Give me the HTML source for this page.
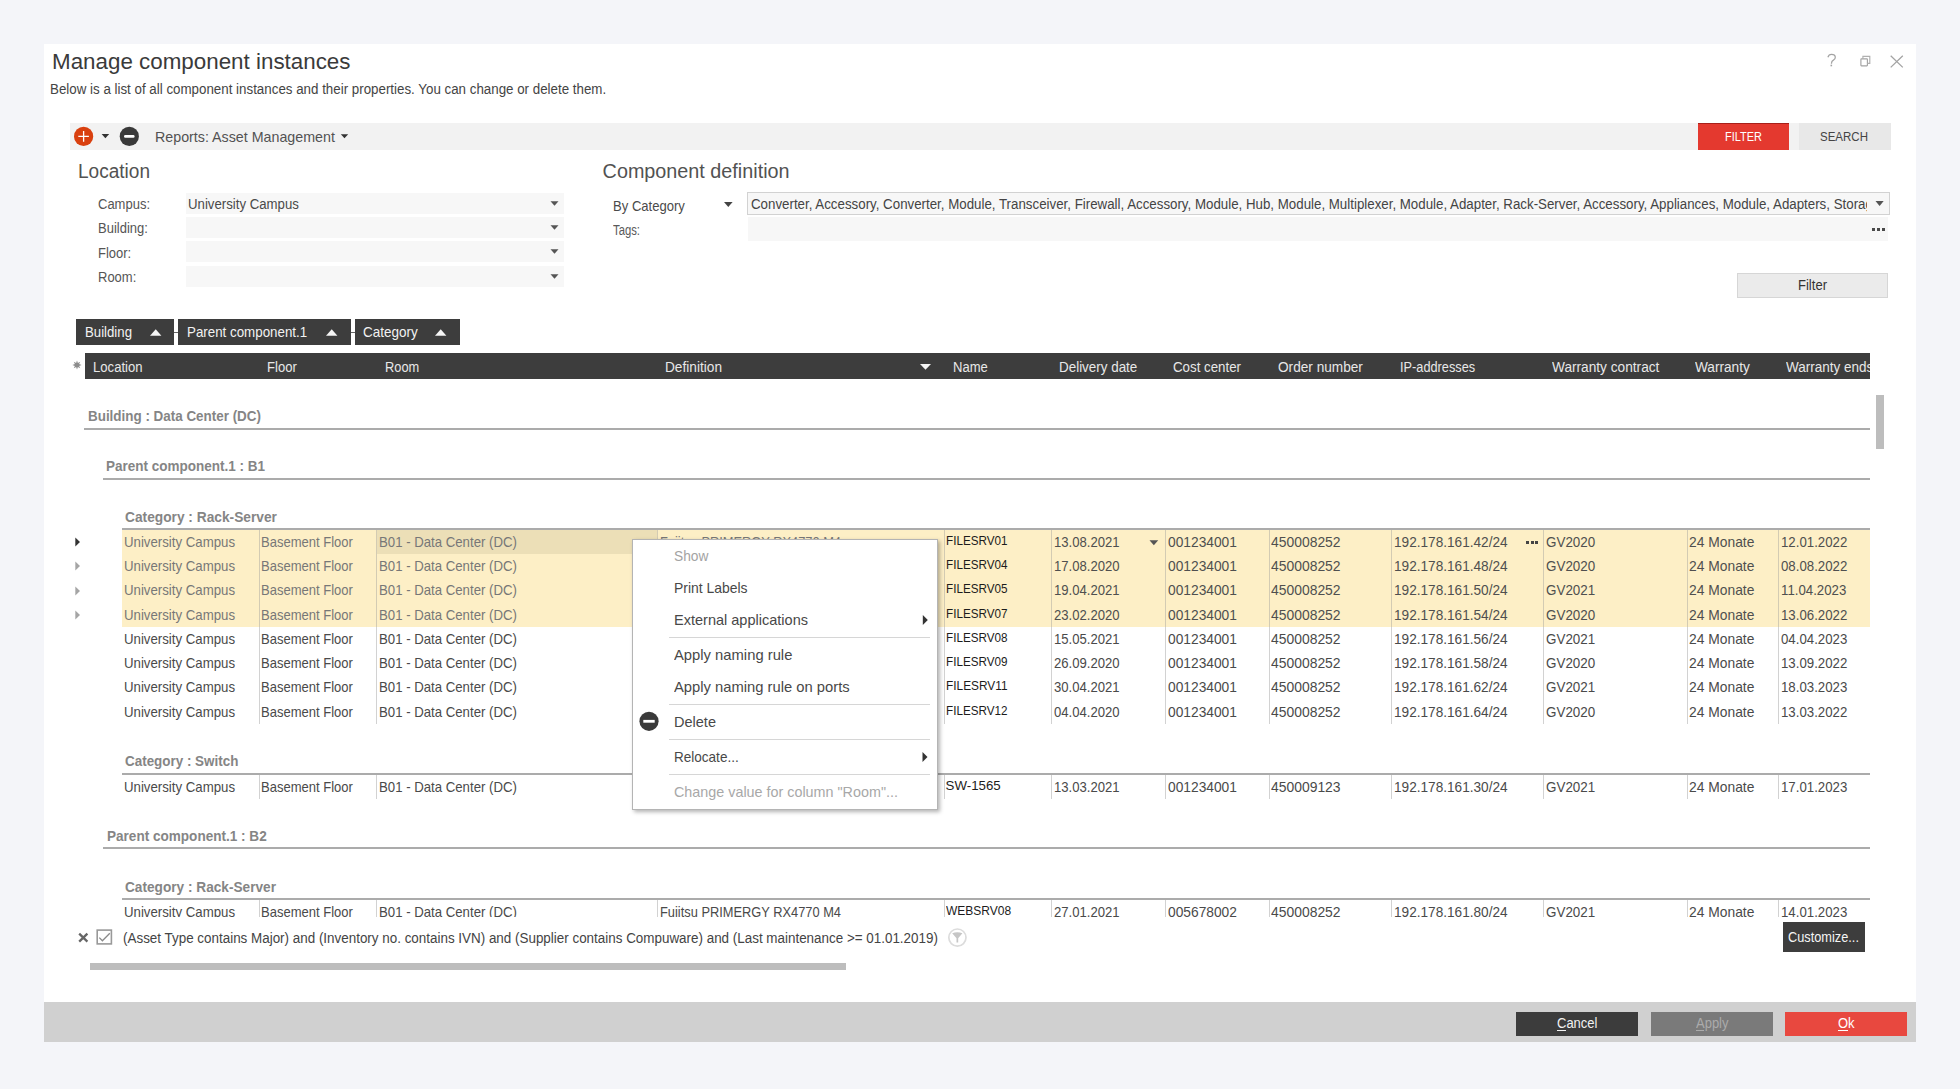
<!DOCTYPE html>
<html><head><meta charset="utf-8"><title>Manage component instances</title>
<style>
html,body{margin:0;padding:0;}
body{width:1960px;height:1089px;overflow:hidden;background:#f4f5f9;position:relative;font-family:"Liberation Sans",sans-serif;}
body div,body span,body svg{position:absolute;}
.t{white-space:nowrap;line-height:1;transform-origin:0 0;}
</style></head><body>
<div style="left:44px;top:44px;width:1872px;height:997.5px;background:#fff;"></div>
<span class="t" style="left:52.3px;top:50.92px;font-size:22.3px;color:#3a3a3a;transform:scaleX(1.0034);">Manage component instances</span>
<span class="t" style="left:49.6px;top:81.78px;font-size:14.429px;color:#444;transform:scaleX(0.9260);">Below is a list of all component instances and their properties. You can change or delete them.</span>
<svg style="left:1820px;top:50px" width="90" height="22" viewBox="1820 50 90 22"><path d="M1827.9 57.3 q0.9-2.9 3.6-2.9 q3.5 0 3.8 2.7 q0.2 1.8-1.9 3 q-1.9 1-1.9 3.2 v0.4" fill="none" stroke="#a3a3a3" stroke-width="1.25"/><rect x="1830.5" y="64.7" width="1.6" height="1.6" fill="#a3a3a3"/><rect x="1860.9" y="58.9" width="6.5" height="6.9" fill="none" stroke="#a3a3a3" stroke-width="1.15" rx="0.5"/><path d="M1862.9 58.9 v-2.5 h6.9 v7 h-2.4" fill="none" stroke="#b0b0b0" stroke-width="1.15"/><path d="M1890.7 55.8 L1902.8 67.4 M1902.8 55.8 L1890.7 67.4" stroke="#a3a3a3" stroke-width="1.3"/></svg>
<div style="left:70px;top:123px;width:1821px;height:27px;background:#f2f2f2;"></div>
<svg style="left:70px;top:123px" width="290" height="27" viewBox="70 123 290 27"><circle cx="83.6" cy="136.4" r="9.6" fill="#d9400f"/><path d="M83.6 131.1 v10.6 M78.3 136.4 h10.6" stroke="#fff" stroke-width="1.3"/><path d="M101.6 134.1 h7.6 l-3.8 4.2z" fill="#333"/><circle cx="129.3" cy="136.4" r="9.6" fill="#3a3a3a"/><path d="M125.3 136.4 h8" stroke="#fff" stroke-width="2.6" stroke-linecap="round"/><path d="M340.8 134.2 h7.4 l-3.7 4.1z" fill="#333"/></svg>
<span class="t" style="left:155px;top:129.3px;font-size:15.12px;color:#525252;transform:scaleX(0.9436);">Reports: Asset Management</span>
<div style="left:1698px;top:123px;width:91px;height:27px;background:#e4392f;border-top:1px solid #a8201a;box-sizing:border-box;"></div>
<span class="t" style="left:1724.7px;top:129.88px;font-size:13.608px;color:#fff;transform:scaleX(0.8067);">FILTER</span>
<div style="left:1799px;top:123px;width:92px;height:27px;background:#e8e8e8;"></div>
<span class="t" style="left:1819.6px;top:129.88px;font-size:13.608px;color:#444;transform:scaleX(0.8464);">SEARCH</span>
<span class="t" style="left:78.4px;top:161.99px;font-size:19.5px;color:#525252;transform:scaleX(0.9767);">Location</span>
<span class="t" style="left:98.3px;top:197.11px;font-size:14.04px;color:#555;transform:scaleX(0.9259);">Campus:</span>
<div style="left:186px;top:193.0px;width:378px;height:21.0px;background:#f7f7f7;"></div>
<svg style="left:549px;top:193.0px" width="12" height="21"><path d="M1.5 8.2 h8 l-4 4.6z" fill="#555"/></svg>
<span class="t" style="left:98.3px;top:221.31px;font-size:14.04px;color:#555;transform:scaleX(0.9259);">Building:</span>
<div style="left:186px;top:217.2px;width:378px;height:21.0px;background:#f7f7f7;"></div>
<svg style="left:549px;top:217.2px" width="12" height="21"><path d="M1.5 8.2 h8 l-4 4.6z" fill="#555"/></svg>
<span class="t" style="left:98.3px;top:245.51px;font-size:14.04px;color:#555;transform:scaleX(0.9259);">Floor:</span>
<div style="left:186px;top:241.4px;width:378px;height:21.0px;background:#f7f7f7;"></div>
<svg style="left:549px;top:241.4px" width="12" height="21"><path d="M1.5 8.2 h8 l-4 4.6z" fill="#555"/></svg>
<span class="t" style="left:98.3px;top:269.71px;font-size:14.04px;color:#555;transform:scaleX(0.9259);">Room:</span>
<div style="left:186px;top:265.6px;width:378px;height:21.0px;background:#f7f7f7;"></div>
<svg style="left:549px;top:265.6px" width="12" height="21"><path d="M1.5 8.2 h8 l-4 4.6z" fill="#555"/></svg>
<span class="t" style="left:188.2px;top:196.9px;font-size:14.288px;color:#4a4a4a;transform:scaleX(0.9259);">University Campus</span>
<span class="t" style="left:602.6px;top:161.84px;font-size:19.8px;color:#525252;">Component definition</span>
<span class="t" style="left:612.6px;top:199.42px;font-size:14.148px;color:#4a4a4a;transform:scaleX(0.9249);">By Category</span>
<svg style="left:720px;top:198px" width="16" height="14"><path d="M4 4 h8.6 l-4.3 5z" fill="#444"/></svg>
<div style="left:747px;top:192px;width:1143px;height:23px;background:#f7f7f7;border:1px solid #d2d2d2;box-sizing:border-box;"></div>
<div style="left:748px;top:193px;width:1119px;height:21px;overflow:hidden">
<span class="t" style="left:2.5px;top:4.33px;font-size:14.256px;color:#444;transform:scaleX(0.9337);">Converter, Accessory, Converter, Module, Transceiver, Firewall, Accessory, Module, Hub, Module, Multiplexer, Module, Adapter, Rack-Server, Accessory, Appliances, Module, Adapters, Storage, Accessory</span>
</div>
<svg style="left:1872px;top:198px" width="16" height="12"><path d="M3.5 3 h8.2 l-4.1 5z" fill="#555"/></svg>
<span class="t" style="left:612.6px;top:223.41px;font-size:14.04px;color:#5a5a5a;transform:scaleX(0.8046);">Tags:</span>
<div style="left:748px;top:217px;width:1140px;height:24px;background:#f7f7f7;"></div>
<div style="left:1872.0px;top:227.6px;width:3.2px;height:3.4px;background:#4a4a4a;"></div>
<div style="left:1876.9px;top:227.6px;width:3.2px;height:3.4px;background:#4a4a4a;"></div>
<div style="left:1881.8px;top:227.6px;width:3.2px;height:3.4px;background:#4a4a4a;"></div>
<div style="left:1737px;top:273px;width:151px;height:25px;background:#ebebeb;border:1px solid #d6d6d6;box-sizing:border-box;"></div>
<span class="t" style="left:1797.7px;top:277.77px;font-size:14.094px;color:#333;transform:scaleX(0.9260);">Filter</span>
<div style="left:76px;top:319px;width:98px;height:26px;background:#3d3d3d;"></div>
<span class="t" style="left:84.6px;top:325.34px;font-size:14.364px;color:#f2f2f2;transform:scaleX(0.9196);">Building</span>
<svg style="left:149.7px;top:328px" width="12" height="9"><path d="M0 7.8 h11.4 l-5.7-6.6z" fill="#f5f5f5"/></svg>
<div style="left:178px;top:319px;width:172.5px;height:26px;background:#3d3d3d;"></div>
<span class="t" style="left:186.9px;top:325.34px;font-size:14.364px;color:#f2f2f2;transform:scaleX(0.9293);">Parent component.1</span>
<svg style="left:325.7px;top:328px" width="12" height="9"><path d="M0 7.8 h11.4 l-5.7-6.6z" fill="#f5f5f5"/></svg>
<div style="left:355px;top:319px;width:105px;height:26px;background:#3d3d3d;"></div>
<span class="t" style="left:363.1px;top:325.34px;font-size:14.364px;color:#f2f2f2;transform:scaleX(0.9403);">Category</span>
<svg style="left:434.8px;top:328px" width="12" height="9"><path d="M0 7.8 h11.4 l-5.7-6.6z" fill="#f5f5f5"/></svg>
<div style="left:174px;top:331.5px;width:4px;height:1.0px;background:#666;"></div>
<div style="left:350.5px;top:331.5px;width:4.5px;height:1.0px;background:#666;"></div>
<div style="left:85px;top:353px;width:1785px;height:26px;background:#3d3d3d;"></div>
<svg style="left:71.2px;top:359.2px" width="12" height="12"><polygon points="6.00,1.40 5.12,3.88 2.75,2.75 3.88,5.12 1.40,6.00 3.88,6.88 2.75,9.25 5.12,8.12 6.00,10.60 6.88,8.12 9.25,9.25 8.12,6.88 10.60,6.00 8.12,5.12 9.25,2.75 6.88,3.88" fill="#8c8c8c"/></svg>
<div style="left:85px;top:353px;width:785px;height:26px;overflow:hidden"></div>
<div style="left:85px;top:353px;width:1785px;height:26px;overflow:hidden">
<span class="t" style="left:7.9px;top:6.56px;font-size:14.58px;color:#e8e8e8;transform:scaleX(0.8999);">Location</span>
<span class="t" style="left:182px;top:6.56px;font-size:14.58px;color:#e8e8e8;transform:scaleX(0.8972);">Floor</span>
<span class="t" style="left:299.8px;top:6.56px;font-size:14.58px;color:#e8e8e8;transform:scaleX(0.8794);">Room</span>
<span class="t" style="left:580.3px;top:6.56px;font-size:14.58px;color:#e8e8e8;transform:scaleX(0.9378);">Definition</span>
<span class="t" style="left:868.2px;top:6.56px;font-size:14.58px;color:#e8e8e8;transform:scaleX(0.8948);">Name</span>
<span class="t" style="left:974px;top:6.56px;font-size:14.58px;color:#e8e8e8;transform:scaleX(0.9203);">Delivery date</span>
<span class="t" style="left:1088px;top:6.56px;font-size:14.58px;color:#e8e8e8;transform:scaleX(0.9122);">Cost center</span>
<span class="t" style="left:1193px;top:6.56px;font-size:14.58px;color:#e8e8e8;transform:scaleX(0.9356);">Order number</span>
<span class="t" style="left:1314.8px;top:6.56px;font-size:14.58px;color:#e8e8e8;transform:scaleX(0.8743);">IP-addresses</span>
<span class="t" style="left:1466.6px;top:6.56px;font-size:14.58px;color:#e8e8e8;transform:scaleX(0.9379);">Warranty contract</span>
<span class="t" style="left:1610px;top:6.56px;font-size:14.58px;color:#e8e8e8;transform:scaleX(0.9352);">Warranty</span>
<span class="t" style="left:1701.4px;top:6.56px;font-size:14.58px;color:#e8e8e8;transform:scaleX(0.9259);">Warranty ends</span>
<svg style="left:834px;top:10px" width="14" height="8"><path d="M1 1 h11 l-5.5 5.8z" fill="#f5f5f5"/></svg>
</div>
<div style="left:1876px;top:395px;width:8px;height:54px;background:#bdbdbd;"></div>
<span class="t" style="left:87.9px;top:409.45px;font-size:14.472px;color:#858585;font-weight:bold;transform:scaleX(0.9275);">Building : Data Center (DC)</span>
<div style="left:84.4px;top:428px;width:1785.6px;height:2px;background:#ababab;"></div>
<span class="t" style="left:106.4px;top:459.45px;font-size:14.472px;color:#858585;font-weight:bold;transform:scaleX(0.9327);">Parent component.1 : B1</span>
<div style="left:103px;top:478px;width:1767px;height:2px;background:#ababab;"></div>
<span class="t" style="left:124.5px;top:509.55px;font-size:14.472px;color:#858585;font-weight:bold;transform:scaleX(0.9496);">Category : Rack-Server</span>
<div style="left:121.5px;top:528px;width:1748.5px;height:2px;background:#ababab;"></div>
<span class="t" style="left:125px;top:753.75px;font-size:14.472px;color:#858585;font-weight:bold;transform:scaleX(0.9278);">Category : Switch</span>
<div style="left:121.5px;top:773px;width:1748.5px;height:2px;background:#ababab;"></div>
<span class="t" style="left:106.6px;top:829.05px;font-size:14.472px;color:#858585;font-weight:bold;transform:scaleX(0.9368);">Parent component.1 : B2</span>
<div style="left:103px;top:847px;width:1767px;height:2px;background:#ababab;"></div>
<span class="t" style="left:125px;top:879.55px;font-size:14.472px;color:#858585;font-weight:bold;transform:scaleX(0.9434);">Category : Rack-Server</span>
<div style="left:121.5px;top:898px;width:1748.5px;height:2px;background:#ababab;"></div>
<div style="left:121.5px;top:530px;width:1748.5px;height:97px;background:#fdefc6;"></div>
<div style="left:376px;top:530px;width:281px;height:24px;background:#ecdfb7;"></div>
<span class="t" style="left:123.9px;top:534.88px;font-size:14.31px;color:#777777;transform:scaleX(0.9259);">University Campus</span>
<span class="t" style="left:261.4px;top:534.88px;font-size:14.31px;color:#777777;transform:scaleX(0.9111);">Basement Floor</span>
<span class="t" style="left:379px;top:534.88px;font-size:14.31px;color:#777777;transform:scaleX(0.9231);">B01 - Data Center (DC)</span>
<span class="t" style="left:659.5px;top:534.88px;font-size:14.31px;color:#777777;transform:scaleX(0.8981);">Fujitsu PRIMERGY RX4770 M4</span>
<span class="t" style="left:1054px;top:534.88px;font-size:14.31px;color:#4f4f4f;transform:scaleX(0.9167);">13.08.2021</span>
<span class="t" style="left:1167.5px;top:534.88px;font-size:14.31px;color:#4f4f4f;transform:scaleX(0.9630);">001234001</span>
<span class="t" style="left:1271.3px;top:534.88px;font-size:14.31px;color:#4f4f4f;transform:scaleX(0.9722);">450008252</span>
<span class="t" style="left:1393.9px;top:534.88px;font-size:14.31px;color:#4f4f4f;transform:scaleX(0.9528);">192.178.161.42/24</span>
<span class="t" style="left:1545.7px;top:534.88px;font-size:14.31px;color:#4f4f4f;transform:scaleX(0.9389);">GV2020</span>
<span class="t" style="left:1689.2px;top:534.88px;font-size:14.31px;color:#4f4f4f;transform:scaleX(0.9676);">24 Monate</span>
<span class="t" style="left:1781px;top:534.88px;font-size:14.31px;color:#4f4f4f;transform:scaleX(0.9259);">12.01.2022</span>
<span class="t" style="left:945.6px;top:533.75px;font-size:13.284px;color:#1c1c1c;transform:scaleX(0.8812);">FILESRV01</span>
<span class="t" style="left:123.9px;top:559.13px;font-size:14.31px;color:#777777;transform:scaleX(0.9259);">University Campus</span>
<span class="t" style="left:261.4px;top:559.13px;font-size:14.31px;color:#777777;transform:scaleX(0.9111);">Basement Floor</span>
<span class="t" style="left:379px;top:559.13px;font-size:14.31px;color:#777777;transform:scaleX(0.9231);">B01 - Data Center (DC)</span>
<span class="t" style="left:659.5px;top:559.13px;font-size:14.31px;color:#777777;transform:scaleX(0.8981);">Fujitsu PRIMERGY RX4770 M4</span>
<span class="t" style="left:1054px;top:559.13px;font-size:14.31px;color:#4f4f4f;transform:scaleX(0.9167);">17.08.2020</span>
<span class="t" style="left:1167.5px;top:559.13px;font-size:14.31px;color:#4f4f4f;transform:scaleX(0.9630);">001234001</span>
<span class="t" style="left:1271.3px;top:559.13px;font-size:14.31px;color:#4f4f4f;transform:scaleX(0.9722);">450008252</span>
<span class="t" style="left:1393.9px;top:559.13px;font-size:14.31px;color:#4f4f4f;transform:scaleX(0.9528);">192.178.161.48/24</span>
<span class="t" style="left:1545.7px;top:559.13px;font-size:14.31px;color:#4f4f4f;transform:scaleX(0.9389);">GV2020</span>
<span class="t" style="left:1689.2px;top:559.13px;font-size:14.31px;color:#4f4f4f;transform:scaleX(0.9676);">24 Monate</span>
<span class="t" style="left:1781px;top:559.13px;font-size:14.31px;color:#4f4f4f;transform:scaleX(0.9259);">08.08.2022</span>
<span class="t" style="left:945.6px;top:558.0px;font-size:13.284px;color:#1c1c1c;transform:scaleX(0.8812);">FILESRV04</span>
<span class="t" style="left:123.9px;top:583.38px;font-size:14.31px;color:#777777;transform:scaleX(0.9259);">University Campus</span>
<span class="t" style="left:261.4px;top:583.38px;font-size:14.31px;color:#777777;transform:scaleX(0.9111);">Basement Floor</span>
<span class="t" style="left:379px;top:583.38px;font-size:14.31px;color:#777777;transform:scaleX(0.9231);">B01 - Data Center (DC)</span>
<span class="t" style="left:659.5px;top:583.38px;font-size:14.31px;color:#777777;transform:scaleX(0.8981);">Fujitsu PRIMERGY RX4770 M4</span>
<span class="t" style="left:1054px;top:583.38px;font-size:14.31px;color:#4f4f4f;transform:scaleX(0.9167);">19.04.2021</span>
<span class="t" style="left:1167.5px;top:583.38px;font-size:14.31px;color:#4f4f4f;transform:scaleX(0.9630);">001234001</span>
<span class="t" style="left:1271.3px;top:583.38px;font-size:14.31px;color:#4f4f4f;transform:scaleX(0.9722);">450008252</span>
<span class="t" style="left:1393.9px;top:583.38px;font-size:14.31px;color:#4f4f4f;transform:scaleX(0.9528);">192.178.161.50/24</span>
<span class="t" style="left:1545.7px;top:583.38px;font-size:14.31px;color:#4f4f4f;transform:scaleX(0.9389);">GV2021</span>
<span class="t" style="left:1689.2px;top:583.38px;font-size:14.31px;color:#4f4f4f;transform:scaleX(0.9676);">24 Monate</span>
<span class="t" style="left:1781px;top:583.38px;font-size:14.31px;color:#4f4f4f;transform:scaleX(0.9259);">11.04.2023</span>
<span class="t" style="left:945.6px;top:582.25px;font-size:13.284px;color:#1c1c1c;transform:scaleX(0.8812);">FILESRV05</span>
<span class="t" style="left:123.9px;top:607.63px;font-size:14.31px;color:#777777;transform:scaleX(0.9259);">University Campus</span>
<span class="t" style="left:261.4px;top:607.63px;font-size:14.31px;color:#777777;transform:scaleX(0.9111);">Basement Floor</span>
<span class="t" style="left:379px;top:607.63px;font-size:14.31px;color:#777777;transform:scaleX(0.9231);">B01 - Data Center (DC)</span>
<span class="t" style="left:659.5px;top:607.63px;font-size:14.31px;color:#777777;transform:scaleX(0.8981);">Fujitsu PRIMERGY RX4770 M4</span>
<span class="t" style="left:1054px;top:607.63px;font-size:14.31px;color:#4f4f4f;transform:scaleX(0.9167);">23.02.2020</span>
<span class="t" style="left:1167.5px;top:607.63px;font-size:14.31px;color:#4f4f4f;transform:scaleX(0.9630);">001234001</span>
<span class="t" style="left:1271.3px;top:607.63px;font-size:14.31px;color:#4f4f4f;transform:scaleX(0.9722);">450008252</span>
<span class="t" style="left:1393.9px;top:607.63px;font-size:14.31px;color:#4f4f4f;transform:scaleX(0.9528);">192.178.161.54/24</span>
<span class="t" style="left:1545.7px;top:607.63px;font-size:14.31px;color:#4f4f4f;transform:scaleX(0.9389);">GV2020</span>
<span class="t" style="left:1689.2px;top:607.63px;font-size:14.31px;color:#4f4f4f;transform:scaleX(0.9676);">24 Monate</span>
<span class="t" style="left:1781px;top:607.63px;font-size:14.31px;color:#4f4f4f;transform:scaleX(0.9259);">13.06.2022</span>
<span class="t" style="left:945.6px;top:606.5px;font-size:13.284px;color:#1c1c1c;transform:scaleX(0.8812);">FILESRV07</span>
<span class="t" style="left:123.9px;top:631.88px;font-size:14.31px;color:#4a4a4a;transform:scaleX(0.9259);">University Campus</span>
<span class="t" style="left:261.4px;top:631.88px;font-size:14.31px;color:#4a4a4a;transform:scaleX(0.9111);">Basement Floor</span>
<span class="t" style="left:379px;top:631.88px;font-size:14.31px;color:#4a4a4a;transform:scaleX(0.9231);">B01 - Data Center (DC)</span>
<span class="t" style="left:659.5px;top:631.88px;font-size:14.31px;color:#4a4a4a;transform:scaleX(0.8981);">Fujitsu PRIMERGY RX4770 M4</span>
<span class="t" style="left:1054px;top:631.88px;font-size:14.31px;color:#4a4a4a;transform:scaleX(0.9167);">15.05.2021</span>
<span class="t" style="left:1167.5px;top:631.88px;font-size:14.31px;color:#4a4a4a;transform:scaleX(0.9630);">001234001</span>
<span class="t" style="left:1271.3px;top:631.88px;font-size:14.31px;color:#4a4a4a;transform:scaleX(0.9722);">450008252</span>
<span class="t" style="left:1393.9px;top:631.88px;font-size:14.31px;color:#4a4a4a;transform:scaleX(0.9528);">192.178.161.56/24</span>
<span class="t" style="left:1545.7px;top:631.88px;font-size:14.31px;color:#4a4a4a;transform:scaleX(0.9389);">GV2021</span>
<span class="t" style="left:1689.2px;top:631.88px;font-size:14.31px;color:#4a4a4a;transform:scaleX(0.9676);">24 Monate</span>
<span class="t" style="left:1781px;top:631.88px;font-size:14.31px;color:#4a4a4a;transform:scaleX(0.9259);">04.04.2023</span>
<span class="t" style="left:945.6px;top:630.75px;font-size:13.284px;color:#1c1c1c;transform:scaleX(0.8812);">FILESRV08</span>
<span class="t" style="left:123.9px;top:656.13px;font-size:14.31px;color:#4a4a4a;transform:scaleX(0.9259);">University Campus</span>
<span class="t" style="left:261.4px;top:656.13px;font-size:14.31px;color:#4a4a4a;transform:scaleX(0.9111);">Basement Floor</span>
<span class="t" style="left:379px;top:656.13px;font-size:14.31px;color:#4a4a4a;transform:scaleX(0.9231);">B01 - Data Center (DC)</span>
<span class="t" style="left:659.5px;top:656.13px;font-size:14.31px;color:#4a4a4a;transform:scaleX(0.8981);">Fujitsu PRIMERGY RX4770 M4</span>
<span class="t" style="left:1054px;top:656.13px;font-size:14.31px;color:#4a4a4a;transform:scaleX(0.9167);">26.09.2020</span>
<span class="t" style="left:1167.5px;top:656.13px;font-size:14.31px;color:#4a4a4a;transform:scaleX(0.9630);">001234001</span>
<span class="t" style="left:1271.3px;top:656.13px;font-size:14.31px;color:#4a4a4a;transform:scaleX(0.9722);">450008252</span>
<span class="t" style="left:1393.9px;top:656.13px;font-size:14.31px;color:#4a4a4a;transform:scaleX(0.9528);">192.178.161.58/24</span>
<span class="t" style="left:1545.7px;top:656.13px;font-size:14.31px;color:#4a4a4a;transform:scaleX(0.9389);">GV2020</span>
<span class="t" style="left:1689.2px;top:656.13px;font-size:14.31px;color:#4a4a4a;transform:scaleX(0.9676);">24 Monate</span>
<span class="t" style="left:1781px;top:656.13px;font-size:14.31px;color:#4a4a4a;transform:scaleX(0.9259);">13.09.2022</span>
<span class="t" style="left:945.6px;top:655.0px;font-size:13.284px;color:#1c1c1c;transform:scaleX(0.8812);">FILESRV09</span>
<span class="t" style="left:123.9px;top:680.38px;font-size:14.31px;color:#4a4a4a;transform:scaleX(0.9259);">University Campus</span>
<span class="t" style="left:261.4px;top:680.38px;font-size:14.31px;color:#4a4a4a;transform:scaleX(0.9111);">Basement Floor</span>
<span class="t" style="left:379px;top:680.38px;font-size:14.31px;color:#4a4a4a;transform:scaleX(0.9231);">B01 - Data Center (DC)</span>
<span class="t" style="left:659.5px;top:680.38px;font-size:14.31px;color:#4a4a4a;transform:scaleX(0.8981);">Fujitsu PRIMERGY RX4770 M4</span>
<span class="t" style="left:1054px;top:680.38px;font-size:14.31px;color:#4a4a4a;transform:scaleX(0.9167);">30.04.2021</span>
<span class="t" style="left:1167.5px;top:680.38px;font-size:14.31px;color:#4a4a4a;transform:scaleX(0.9630);">001234001</span>
<span class="t" style="left:1271.3px;top:680.38px;font-size:14.31px;color:#4a4a4a;transform:scaleX(0.9722);">450008252</span>
<span class="t" style="left:1393.9px;top:680.38px;font-size:14.31px;color:#4a4a4a;transform:scaleX(0.9528);">192.178.161.62/24</span>
<span class="t" style="left:1545.7px;top:680.38px;font-size:14.31px;color:#4a4a4a;transform:scaleX(0.9389);">GV2021</span>
<span class="t" style="left:1689.2px;top:680.38px;font-size:14.31px;color:#4a4a4a;transform:scaleX(0.9676);">24 Monate</span>
<span class="t" style="left:1781px;top:680.38px;font-size:14.31px;color:#4a4a4a;transform:scaleX(0.9259);">18.03.2023</span>
<span class="t" style="left:945.6px;top:679.25px;font-size:13.284px;color:#1c1c1c;transform:scaleX(0.8939);">FILESRV11</span>
<span class="t" style="left:123.9px;top:704.63px;font-size:14.31px;color:#4a4a4a;transform:scaleX(0.9259);">University Campus</span>
<span class="t" style="left:261.4px;top:704.63px;font-size:14.31px;color:#4a4a4a;transform:scaleX(0.9111);">Basement Floor</span>
<span class="t" style="left:379px;top:704.63px;font-size:14.31px;color:#4a4a4a;transform:scaleX(0.9231);">B01 - Data Center (DC)</span>
<span class="t" style="left:659.5px;top:704.63px;font-size:14.31px;color:#4a4a4a;transform:scaleX(0.8981);">Fujitsu PRIMERGY RX4770 M4</span>
<span class="t" style="left:1054px;top:704.63px;font-size:14.31px;color:#4a4a4a;transform:scaleX(0.9167);">04.04.2020</span>
<span class="t" style="left:1167.5px;top:704.63px;font-size:14.31px;color:#4a4a4a;transform:scaleX(0.9630);">001234001</span>
<span class="t" style="left:1271.3px;top:704.63px;font-size:14.31px;color:#4a4a4a;transform:scaleX(0.9722);">450008252</span>
<span class="t" style="left:1393.9px;top:704.63px;font-size:14.31px;color:#4a4a4a;transform:scaleX(0.9528);">192.178.161.64/24</span>
<span class="t" style="left:1545.7px;top:704.63px;font-size:14.31px;color:#4a4a4a;transform:scaleX(0.9389);">GV2020</span>
<span class="t" style="left:1689.2px;top:704.63px;font-size:14.31px;color:#4a4a4a;transform:scaleX(0.9676);">24 Monate</span>
<span class="t" style="left:1781px;top:704.63px;font-size:14.31px;color:#4a4a4a;transform:scaleX(0.9259);">13.03.2022</span>
<span class="t" style="left:945.6px;top:703.5px;font-size:13.284px;color:#1c1c1c;transform:scaleX(0.8812);">FILESRV12</span>
<div style="left:258.5px;top:530px;width:1.0px;height:97px;background:#d3cbb3;"></div>
<div style="left:258.5px;top:627px;width:1.0px;height:97px;background:#d2d2d2;"></div>
<div style="left:258.5px;top:775px;width:1.0px;height:24px;background:#d2d2d2;"></div>
<div style="left:258.5px;top:900px;width:1.0px;height:17px;background:#d2d2d2;"></div>
<div style="left:376px;top:530px;width:1px;height:97px;background:#d3cbb3;"></div>
<div style="left:376px;top:627px;width:1px;height:97px;background:#d2d2d2;"></div>
<div style="left:376px;top:775px;width:1px;height:24px;background:#d2d2d2;"></div>
<div style="left:376px;top:900px;width:1px;height:17px;background:#d2d2d2;"></div>
<div style="left:657px;top:530px;width:1px;height:97px;background:#d3cbb3;"></div>
<div style="left:657px;top:627px;width:1px;height:97px;background:#d2d2d2;"></div>
<div style="left:657px;top:775px;width:1px;height:24px;background:#d2d2d2;"></div>
<div style="left:657px;top:900px;width:1px;height:17px;background:#d2d2d2;"></div>
<div style="left:944px;top:530px;width:1px;height:97px;background:#d3cbb3;"></div>
<div style="left:944px;top:627px;width:1px;height:97px;background:#d2d2d2;"></div>
<div style="left:944px;top:775px;width:1px;height:24px;background:#d2d2d2;"></div>
<div style="left:944px;top:900px;width:1px;height:17px;background:#d2d2d2;"></div>
<div style="left:1051px;top:530px;width:1px;height:97px;background:#d3cbb3;"></div>
<div style="left:1051px;top:627px;width:1px;height:97px;background:#d2d2d2;"></div>
<div style="left:1051px;top:775px;width:1px;height:24px;background:#d2d2d2;"></div>
<div style="left:1051px;top:900px;width:1px;height:17px;background:#d2d2d2;"></div>
<div style="left:1165px;top:530px;width:1px;height:97px;background:#d3cbb3;"></div>
<div style="left:1165px;top:627px;width:1px;height:97px;background:#d2d2d2;"></div>
<div style="left:1165px;top:775px;width:1px;height:24px;background:#d2d2d2;"></div>
<div style="left:1165px;top:900px;width:1px;height:17px;background:#d2d2d2;"></div>
<div style="left:1269px;top:530px;width:1px;height:97px;background:#d3cbb3;"></div>
<div style="left:1269px;top:627px;width:1px;height:97px;background:#d2d2d2;"></div>
<div style="left:1269px;top:775px;width:1px;height:24px;background:#d2d2d2;"></div>
<div style="left:1269px;top:900px;width:1px;height:17px;background:#d2d2d2;"></div>
<div style="left:1391px;top:530px;width:1px;height:97px;background:#d3cbb3;"></div>
<div style="left:1391px;top:627px;width:1px;height:97px;background:#d2d2d2;"></div>
<div style="left:1391px;top:775px;width:1px;height:24px;background:#d2d2d2;"></div>
<div style="left:1391px;top:900px;width:1px;height:17px;background:#d2d2d2;"></div>
<div style="left:1543px;top:530px;width:1px;height:97px;background:#d3cbb3;"></div>
<div style="left:1543px;top:627px;width:1px;height:97px;background:#d2d2d2;"></div>
<div style="left:1543px;top:775px;width:1px;height:24px;background:#d2d2d2;"></div>
<div style="left:1543px;top:900px;width:1px;height:17px;background:#d2d2d2;"></div>
<div style="left:1687px;top:530px;width:1px;height:97px;background:#d3cbb3;"></div>
<div style="left:1687px;top:627px;width:1px;height:97px;background:#d2d2d2;"></div>
<div style="left:1687px;top:775px;width:1px;height:24px;background:#d2d2d2;"></div>
<div style="left:1687px;top:900px;width:1px;height:17px;background:#d2d2d2;"></div>
<div style="left:1778px;top:530px;width:1px;height:97px;background:#d3cbb3;"></div>
<div style="left:1778px;top:627px;width:1px;height:97px;background:#d2d2d2;"></div>
<div style="left:1778px;top:775px;width:1px;height:24px;background:#d2d2d2;"></div>
<div style="left:1778px;top:900px;width:1px;height:17px;background:#d2d2d2;"></div>
<svg style="left:74px;top:536.0px" width="8" height="12"><path d="M1.3 1.5 v9 l4.7-4.5z" fill="#333"/></svg>
<svg style="left:74px;top:560.25px" width="8" height="12"><path d="M1.3 1.5 v9 l4.7-4.5z" fill="#a5a5a5"/></svg>
<svg style="left:74px;top:584.5px" width="8" height="12"><path d="M1.3 1.5 v9 l4.7-4.5z" fill="#a5a5a5"/></svg>
<svg style="left:74px;top:608.75px" width="8" height="12"><path d="M1.3 1.5 v9 l4.7-4.5z" fill="#a5a5a5"/></svg>
<svg style="left:1147px;top:538px" width="14" height="10"><path d="M2.5 2.3 h8.7 l-4.35 5z" fill="#555"/></svg>
<div style="left:1526.0px;top:540.8px;width:3.0px;height:3.0px;background:#444;"></div>
<div style="left:1530.5px;top:540.8px;width:3.0px;height:3.0px;background:#444;"></div>
<div style="left:1535.0px;top:540.8px;width:3.0px;height:3.0px;background:#444;"></div>
<span class="t" style="left:123.9px;top:779.88px;font-size:14.31px;color:#4a4a4a;transform:scaleX(0.9259);">University Campus</span>
<span class="t" style="left:261.4px;top:779.88px;font-size:14.31px;color:#4a4a4a;transform:scaleX(0.9111);">Basement Floor</span>
<span class="t" style="left:379px;top:779.88px;font-size:14.31px;color:#4a4a4a;transform:scaleX(0.9231);">B01 - Data Center (DC)</span>
<span class="t" style="left:659.5px;top:779.88px;font-size:14.31px;color:#4a4a4a;transform:scaleX(0.8981);">Fujitsu PRIMERGY RX4770 M4</span>
<span class="t" style="left:1054px;top:779.88px;font-size:14.31px;color:#4a4a4a;transform:scaleX(0.9167);">13.03.2021</span>
<span class="t" style="left:1167.5px;top:779.88px;font-size:14.31px;color:#4a4a4a;transform:scaleX(0.9630);">001234001</span>
<span class="t" style="left:1271.3px;top:779.88px;font-size:14.31px;color:#4a4a4a;transform:scaleX(0.9722);">450009123</span>
<span class="t" style="left:1393.9px;top:779.88px;font-size:14.31px;color:#4a4a4a;transform:scaleX(0.9528);">192.178.161.30/24</span>
<span class="t" style="left:1545.7px;top:779.88px;font-size:14.31px;color:#4a4a4a;transform:scaleX(0.9389);">GV2021</span>
<span class="t" style="left:1689.2px;top:779.88px;font-size:14.31px;color:#4a4a4a;transform:scaleX(0.9676);">24 Monate</span>
<span class="t" style="left:1781px;top:779.88px;font-size:14.31px;color:#4a4a4a;transform:scaleX(0.9259);">17.01.2023</span>
<span class="t" style="left:945.6px;top:778.75px;font-size:13.284px;color:#1c1c1c;">SW-1565</span>
<div style="left:0;top:900px;width:1960px;height:17px;overflow:hidden">
<span class="t" style="left:123.9px;top:5.38px;font-size:14.31px;color:#4a4a4a;transform:scaleX(0.9259);">University Campus</span>
<span class="t" style="left:261.4px;top:5.38px;font-size:14.31px;color:#4a4a4a;transform:scaleX(0.9111);">Basement Floor</span>
<span class="t" style="left:379px;top:5.38px;font-size:14.31px;color:#4a4a4a;transform:scaleX(0.9231);">B01 - Data Center (DC)</span>
<span class="t" style="left:659.5px;top:5.38px;font-size:14.31px;color:#4a4a4a;transform:scaleX(0.8981);">Fujitsu PRIMERGY RX4770 M4</span>
<span class="t" style="left:1054px;top:5.38px;font-size:14.31px;color:#4a4a4a;transform:scaleX(0.9167);">27.01.2021</span>
<span class="t" style="left:1167.5px;top:5.38px;font-size:14.31px;color:#4a4a4a;transform:scaleX(0.9630);">005678002</span>
<span class="t" style="left:1271.3px;top:5.38px;font-size:14.31px;color:#4a4a4a;transform:scaleX(0.9722);">450008252</span>
<span class="t" style="left:1393.9px;top:5.38px;font-size:14.31px;color:#4a4a4a;transform:scaleX(0.9528);">192.178.161.80/24</span>
<span class="t" style="left:1545.7px;top:5.38px;font-size:14.31px;color:#4a4a4a;transform:scaleX(0.9389);">GV2021</span>
<span class="t" style="left:1689.2px;top:5.38px;font-size:14.31px;color:#4a4a4a;transform:scaleX(0.9676);">24 Monate</span>
<span class="t" style="left:1781px;top:5.38px;font-size:14.31px;color:#4a4a4a;transform:scaleX(0.9259);">14.01.2023</span>
<span class="t" style="left:945.6px;top:4.25px;font-size:13.284px;color:#1c1c1c;transform:scaleX(0.9042);">WEBSRV08</span>
</div>
<div style="left:631.5px;top:538.5px;width:306.5px;height:271.5px;background:#fff;border:1px solid #b4b4b4;box-sizing:border-box;box-shadow:2px 2px 4px rgba(0,0,0,0.30)"></div>
<span class="t" style="left:674.4px;top:548.13px;font-size:15.552px;color:#a3a3a3;transform:scaleX(0.8843);">Show</span>
<span class="t" style="left:674.4px;top:580.13px;font-size:15.552px;color:#484848;transform:scaleX(0.8962);">Print Labels</span>
<span class="t" style="left:674.4px;top:612.43px;font-size:15.552px;color:#484848;transform:scaleX(0.9338);">External applications</span>
<span class="t" style="left:674.4px;top:647.43px;font-size:15.552px;color:#484848;transform:scaleX(0.9512);">Apply naming rule</span>
<span class="t" style="left:674.4px;top:679.43px;font-size:15.552px;color:#484848;transform:scaleX(0.9498);">Apply naming rule on ports</span>
<span class="t" style="left:674.4px;top:714.03px;font-size:15.552px;color:#484848;transform:scaleX(0.9343);">Delete</span>
<span class="t" style="left:674.4px;top:749.03px;font-size:15.552px;color:#484848;transform:scaleX(0.8703);">Relocate...</span>
<span class="t" style="left:674.4px;top:783.63px;font-size:15.552px;color:#a8a8a8;transform:scaleX(0.9230);">Change value for column &quot;Room&quot;...</span>
<div style="left:669px;top:637.0px;width:260.5px;height:1.0px;background:#d6d6d6;"></div>
<div style="left:669px;top:704.1px;width:260.5px;height:1.0px;background:#d6d6d6;"></div>
<div style="left:669px;top:739.0px;width:260.5px;height:1.0px;background:#d6d6d6;"></div>
<div style="left:669px;top:773.8px;width:260.5px;height:1.0px;background:#d6d6d6;"></div>
<svg style="left:918px;top:612px" width="14" height="16"><path d="M4.8 3 v10 l5-5z" fill="#333"/></svg>
<svg style="left:918px;top:749px" width="14" height="16"><path d="M4.5 3 v10 l5-5z" fill="#333"/></svg>
<svg style="left:638px;top:711px" width="22" height="22"><circle cx="11" cy="10.3" r="9.6" fill="#3a3a3a"/><path d="M5.3 10.3 h11.4" stroke="#fff" stroke-width="2.8"/></svg>
<svg style="left:74px;top:926px" width="900" height="24" viewBox="74 926 900 24"><path d="M79.2 933.6 L87.4 941.6 M87.4 933.6 L79.2 941.6" stroke="#666" stroke-width="2.3"/><rect x="97.2" y="930.1" width="14.2" height="13.8" fill="none" stroke="#999" stroke-width="1.6"/><path d="M99.3 937.6 l3.1 3.2 l7.4-7.5" fill="none" stroke="#8a8a8a" stroke-width="1.3"/><circle cx="957.4" cy="937.6" r="8.6" fill="none" stroke="#dcdcdc" stroke-width="1.7"/><path d="M952.2 933.2 Q957.3 931.2 962.4 933.2 L958.2 938.2 V942.6 H956.5 V938.2 Z" fill="#c6c6c6"/></svg>
<span class="t" style="left:123px;top:930.55px;font-size:14.472px;color:#444;transform:scaleX(0.9273);">(Asset Type contains Major) and (Inventory no. contains IVN) and (Supplier contains Compuware) and (Last maintenance &gt;= 01.01.2019)</span>
<div style="left:90px;top:963px;width:755.6px;height:7.4px;background:#bdbdbd;"></div>
<div style="left:1782.5px;top:922.2px;width:82.3px;height:29.6px;background:#3d3d3d;"></div>
<span class="t" style="left:1788.4px;top:930.6px;font-size:13.824px;color:#f5f5f5;transform:scaleX(0.9243);">Customize...</span>
<div style="left:44px;top:1002px;width:1872px;height:39.5px;background:#d0d0d0;"></div>
<div style="left:1516px;top:1011.5px;width:122.2px;height:24.1px;background:#3c3c3c;"></div>
<span class="t" style="left:1556.87px;top:1016.41px;font-size:14.04px;color:#f2f2f2;transform:scaleX(0.9259);">Cancel</span>
<div style="left:1556.87px;top:1029.5px;width:9.39px;height:1.0px;background:#f2f2f2;"></div>
<div style="left:1651px;top:1011.5px;width:121.7px;height:24.1px;background:#7a7a7a;"></div>
<span class="t" style="left:1695.59px;top:1016.41px;font-size:14.04px;color:#ababab;transform:scaleX(0.9259);">Apply</span>
<div style="left:1695.59px;top:1029.5px;width:8.67px;height:1.0px;background:#ababab;"></div>
<div style="left:1785.2px;top:1011.5px;width:122.0px;height:24.1px;background:#e8483f;"></div>
<span class="t" style="left:1837.89px;top:1016.41px;font-size:14.04px;color:#fff;transform:scaleX(0.9259);">Ok</span>
<div style="left:1837.89px;top:1029.5px;width:10.11px;height:1.0px;background:#fff;"></div>
</body></html>
